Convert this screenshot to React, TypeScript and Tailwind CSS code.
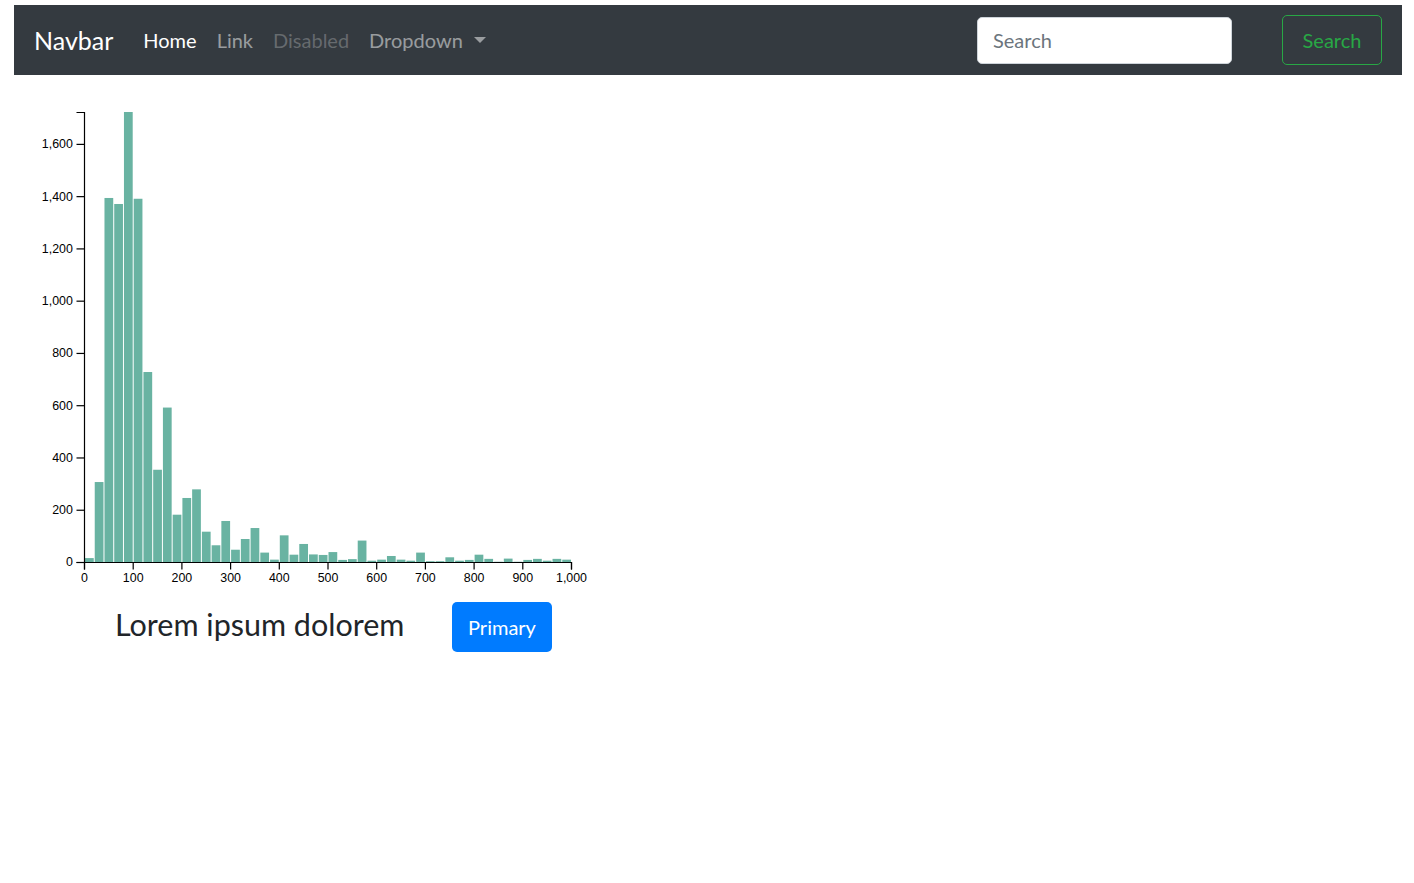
import React from "react";

const counts = [
  15, 306, 1393, 1370, 1722, 1390, 727, 353, 591, 181, 245, 278, 116, 64, 157, 47, 88, 130, 36, 9,
  102, 28, 69, 29, 27, 38, 8, 11, 82, 5, 9, 23, 9, 5, 36, 3, 3, 18, 5, 8, 28, 12, 1, 13, 1, 8, 12,
  5, 12, 9,
];

const W = 487;
const H = 450;
const MAX = 1722;
const TICK = 7.5;
const OFF = 11.2;
const FS = 12.4;

function Histogram() {
  const bw = W / counts.length;
  const y = (v: number) => H - (v * H) / MAX;
  const x = (v: number) => (v * W) / 1000;
  const yTicks = [0, 200, 400, 600, 800, 1000, 1200, 1400, 1600];
  const xTicks = [0, 100, 200, 300, 400, 500, 600, 700, 800, 900, 1000];
  const fmt = (n: number) => n.toLocaleString("en-US");
  return (
    <svg width={600} height={490} className="block overflow-visible">
      <g transform="translate(70,10)">
        {counts.map((c, i) => (
          <rect
            key={i}
            x={i * bw + 1}
            y={y(c)}
            width={bw - 1}
            height={H - y(c)}
            fill="#69b3a2"
          />
        ))}
        {/* x axis */}
        <g transform={`translate(0,${H})`} fontSize={FS} fontFamily="'Liberation Sans', Arial, sans-serif">
          <path d={`M0.5,${TICK}V0.5H${W + 0.5}V${TICK}`} fill="none" stroke="#000" strokeWidth={1.2} />
          {xTicks.map((t) => (
            <g key={t} transform={`translate(${x(t) + 0.5},0)`}>
              <line y2={TICK} stroke="#000" strokeWidth={1.2} />
              <text y={OFF} dy="0.71em" textAnchor="middle" fill="#000">
                {fmt(t)}
              </text>
            </g>
          ))}
        </g>
        {/* y axis */}
        <g fontSize={FS} fontFamily="'Liberation Sans', Arial, sans-serif">
          <path d={`M-${TICK},${H + 0.5}H0.5V0.5H-${TICK}`} fill="none" stroke="#000" strokeWidth={1.2} />
          {yTicks.map((t) => (
            <g key={t} transform={`translate(0,${y(t) + 0.5})`}>
              <line x2={-TICK} stroke="#000" strokeWidth={1.2} />
              <text x={-OFF} dy="0.32em" textAnchor="end" fill="#000">
                {fmt(t)}
              </text>
            </g>
          ))}
        </g>
      </g>
    </svg>
  );
}

export default function App() {
  return (
    <div className="min-h-[883px] bg-white pl-[14px] pr-[12px] pt-[5px]" style={{ fontFamily: "Lato, 'Open Sans', sans-serif" }}>
      <nav className="flex h-[70px] items-center bg-[#343a40] px-[20px]">
        <span className="mr-[20px] text-[25px] leading-none text-white">Navbar</span>
        <div className="flex items-center text-[20px] leading-none">
          <a className="px-[10px] text-white">Home</a>
          <a className="px-[10px] text-[rgba(255,255,255,0.5)]">Link</a>
          <a className="px-[10px] text-[rgba(255,255,255,0.25)]">Disabled</a>
          <a className="flex items-center px-[10px] text-[rgba(255,255,255,0.5)]">
            Dropdown
            <span className="ml-[11px] h-0 w-0 border-x-[6px] border-t-[6px] border-x-transparent border-t-[rgba(255,255,255,0.5)]" />
          </a>
        </div>
        <div className="ml-auto flex items-center">
          <input
            placeholder="Search"
            className="h-[47px] w-[255px] rounded-[5px] border border-[#ced4da] bg-white px-[15px] text-[20px] text-[#495057] outline-none placeholder:text-[#6c757d]"
          />
          <button className="ml-[50px] h-[50px] w-[100px] rounded-[5px] border border-[#28a745] text-[20px] text-[#28a745]">
            Search
          </button>
        </div>
      </nav>
      <div className="mt-[27px]">
        <Histogram />
      </div>
      <div className="mt-[10px] flex items-center">
        <div className="mb-[6px] ml-[101px] w-[337px] text-[30.5px] leading-none text-[#212529]">Lorem ipsum dolorem</div>
        <button className="h-[50px] w-[100px] rounded-[5px] bg-[#007bff] text-[20px] text-white">Primary</button>
      </div>
    </div>
  );
}
